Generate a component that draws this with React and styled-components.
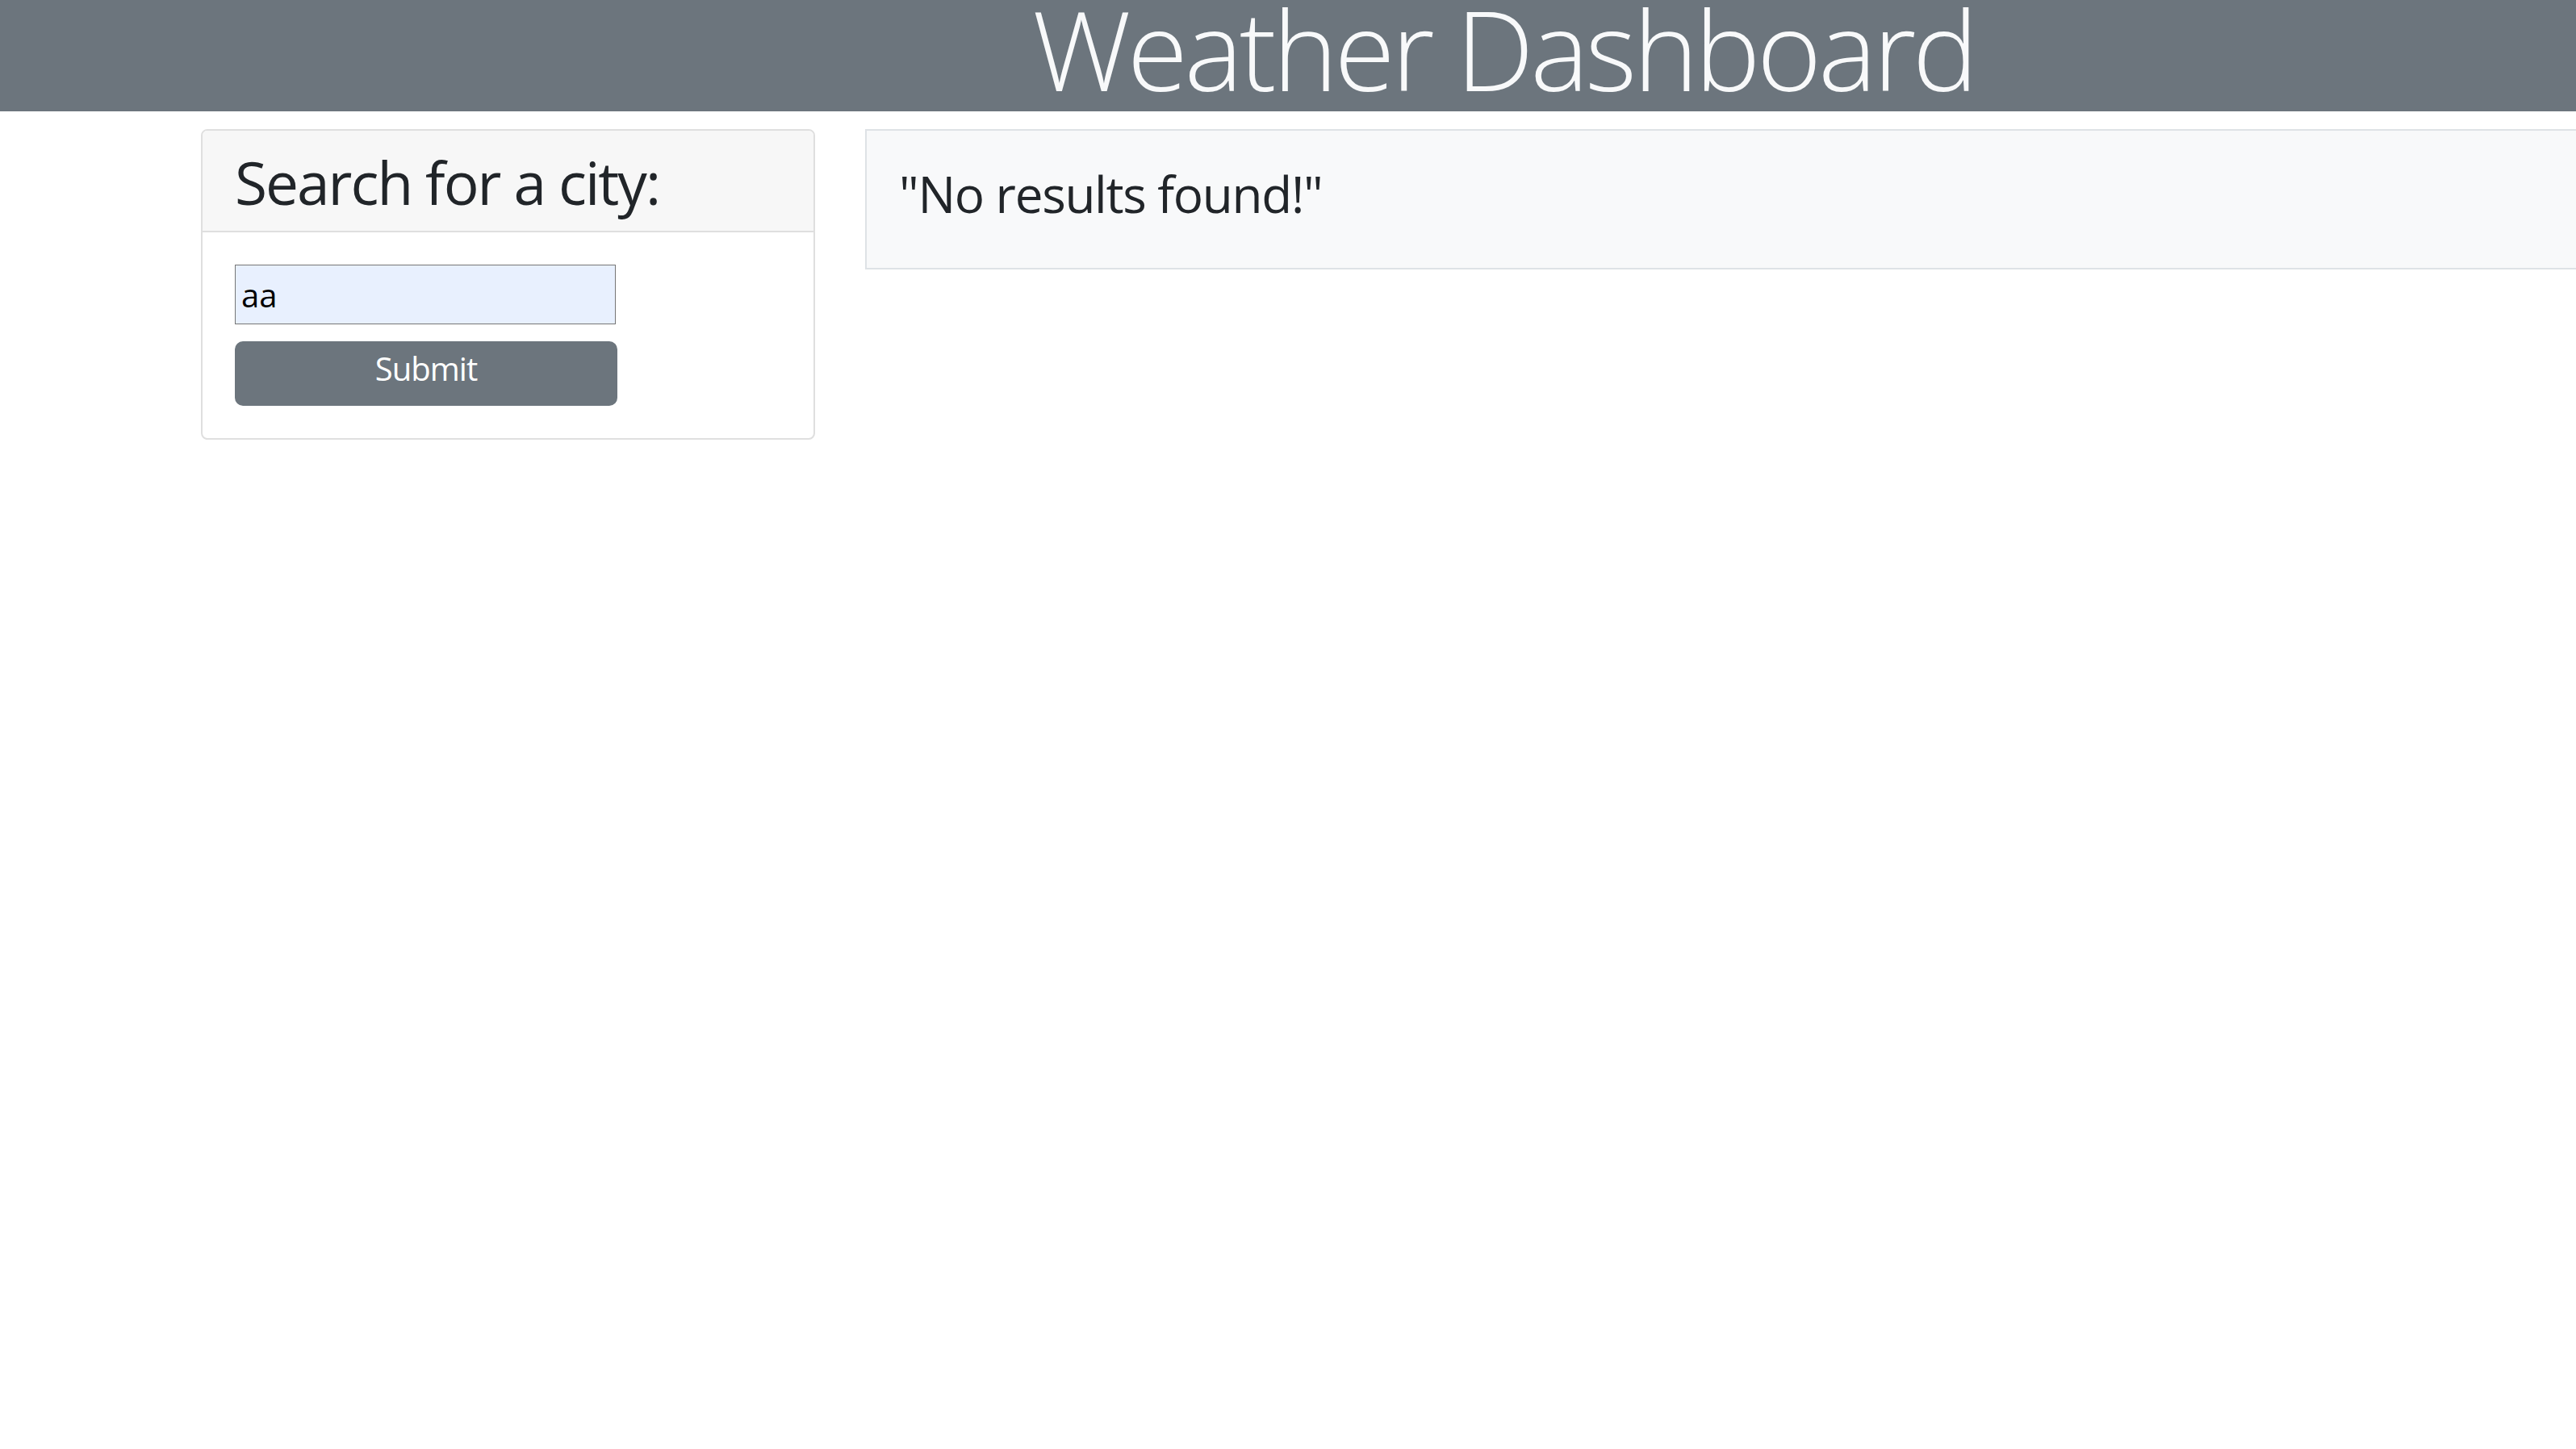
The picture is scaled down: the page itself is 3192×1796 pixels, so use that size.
import styled, { createGlobalStyle } from "styled-components";

const GlobalStyle = createGlobalStyle`
  html,
  body {
    margin: 0;
    padding: 0;
    overflow: hidden;
    background: #ffffff;
  }
  body {
    font-family: "Open Sans", "Noto Sans", sans-serif;
    color: #212529;
  }
  * {
    box-sizing: border-box;
  }
`;

export default function App() {
  return (
    <Page>
      <GlobalStyle />
      <Header>
        <Title>Weather Dashboard</Title>
      </Header>
      <Main>
        <SearchCard>
          <CardHeader>
            <CardTitle>Search for a city:</CardTitle>
          </CardHeader>
          <CardBody>
            <CityInput type="text" defaultValue="aa" />
            <SubmitButton>Submit</SubmitButton>
          </CardBody>
        </SearchCard>
        <ResultsCard>
          <Message>"No results found!"</Message>
        </ResultsCard>
      </Main>
    </Page>
  );
}

// the page is wider than the window, so the header title sits right of centre
const Page = styled.div`
  width: 3726px;
  min-height: 1796px;
`;

const Header = styled.header`
  height: 138px;
  padding-bottom: 18px;
  background: #6c757d;
  display: flex;
  align-items: center;
  justify-content: center;
`;

const Title = styled.h1`
  margin: 0;
  font-size: 137px;
  font-weight: 300;
  line-height: 110px;
  letter-spacing: -4.5px;
  color: #f8f9fa;
  white-space: nowrap;
`;

const Main = styled.main`
  display: flex;
  align-items: flex-start;
  gap: 62px;
  padding: 22px 249px 0;
`;

const SearchCard = styled.section`
  width: 761px;
  flex-shrink: 0;
  background: #ffffff;
  border: 2px solid #dfdfdf;
  border-radius: 8px;
  overflow: hidden;
`;

const CardHeader = styled.div`
  height: 126px;
  padding: 27px 40px 0;
  background: #f7f7f7;
  border-bottom: 2px solid #dfdfdf;
`;

const CardTitle = styled.h2`
  margin: 0;
  font-size: 73px;
  font-weight: 500;
  line-height: 1;
  letter-spacing: -2px;
  white-space: nowrap;
`;

const CardBody = styled.div`
  padding: 40px;
  display: flex;
  flex-direction: column;
  align-items: flex-start;
  gap: 21px;
`;

const CityInput = styled.input`
  width: 472px;
  height: 74px;
  padding: 0 7px;
  border: 1px solid #767676;
  border-radius: 0;
  background: #e8f0fe;
  font-family: "Open Sans", "Noto Sans", sans-serif;
  font-size: 40px;
  color: #000000;
  outline: none;
`;

const SubmitButton = styled.button`
  width: 474px;
  height: 80px;
  padding: 0 0 13px;
  border: none;
  border-radius: 10px;
  background: #6c757d;
  color: #ffffff;
  font-family: "Open Sans", "Noto Sans", sans-serif;
  font-size: 40px;
  line-height: 1;
  letter-spacing: -1px;
  display: flex;
  align-items: center;
  justify-content: center;
`;

const ResultsCard = styled.section`
  flex: 1;
  padding: 47px 40px 61px;
  background: #f8f9fa;
  border: 2px solid #dee2e6;
`;

const Message = styled.h3`
  margin: 0;
  font-size: 62px;
  font-weight: 500;
  line-height: 1;
  letter-spacing: -1.3px;
  white-space: nowrap;
`;
